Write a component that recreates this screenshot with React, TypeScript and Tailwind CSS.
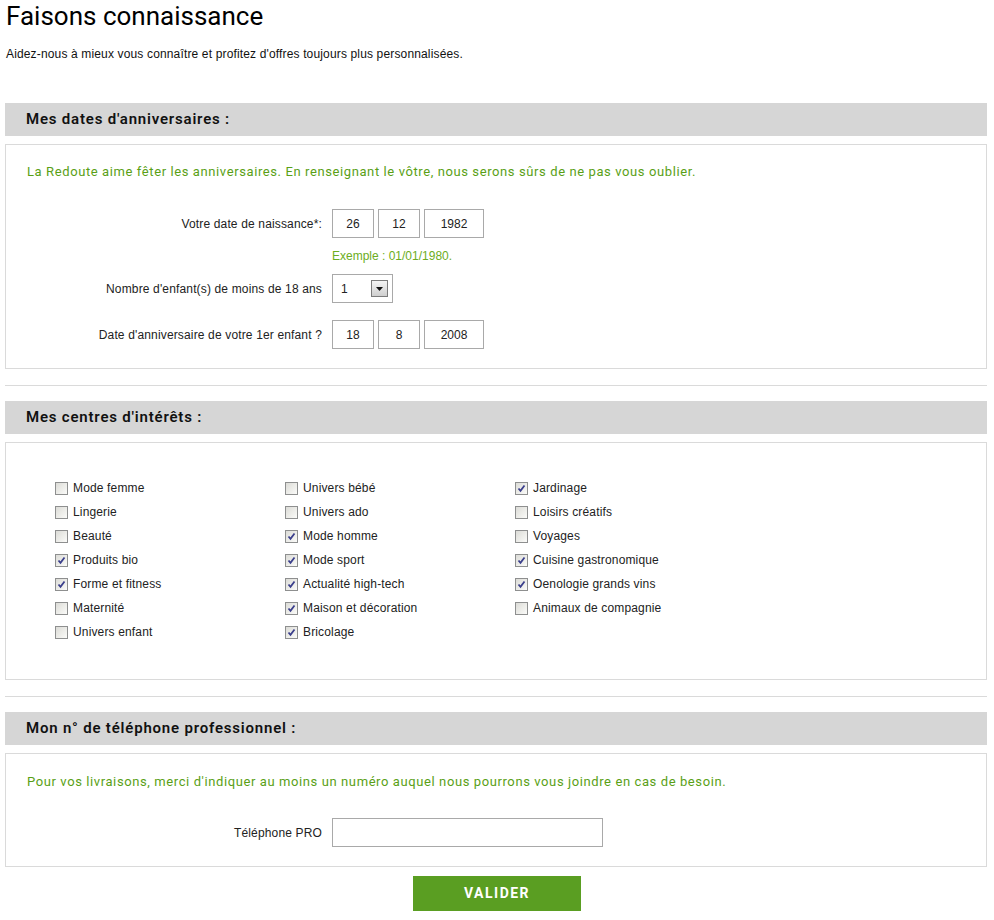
import React from 'react';

const din = { fontFamily: 'Roboto, "Open Sans", sans-serif' };
const arial = { fontFamily: '"Liberation Sans", Arial, sans-serif' };

function Checkbox({ checked }: { checked: boolean }) {
  return (
    <span className="inline-flex h-[13px] w-[13px] shrink-0 items-center justify-center border border-[#8e8f8f] bg-gradient-to-br from-[#dcdcd7] to-[#fbfbf9]">
      {checked && (
        <svg width="9" height="9" viewBox="0 0 9 9">
          <path d="M1.5 4.5 L3.5 6.8 L7.5 1.5" fill="none" stroke="#3b3f8c" strokeWidth="1.8" />
        </svg>
      )}
    </span>
  );
}

function SectionHeader({ title }: { title: string }) {
  return (
    <div className="flex h-[33px] items-center bg-[#d6d6d6] pl-[21px] text-[15px] font-semibold tracking-[0.8px] text-[#111]" style={din}>
      {title}
    </div>
  );
}

function Field({ value, w }: { value: string; w: string }) {
  return (
    <div className={`flex h-[29px] items-center justify-center border border-[#a9a9a9] bg-white text-[12px] text-[#222] ${w}`}>
      {value}
    </div>
  );
}

function Row({ label, children }: { label: string; children: React.ReactNode }) {
  return (
    <div className="flex items-center">
      <div className="w-[316px] text-right text-[12px] tracking-[0.15px] text-[#222]">{label}</div>
      <div className="ml-[10px] flex gap-[4px]">{children}</div>
    </div>
  );
}

const interests: [string, boolean][][] = [
  [
    ['Mode femme', false],
    ['Lingerie', false],
    ['Beauté', false],
    ['Produits bio', true],
    ['Forme et fitness', true],
    ['Maternité', false],
    ['Univers enfant', false],
  ],
  [
    ['Univers bébé', false],
    ['Univers ado', false],
    ['Mode homme', true],
    ['Mode sport', true],
    ['Actualité high-tech', true],
    ['Maison et décoration', true],
    ['Bricolage', true],
  ],
  [
    ['Jardinage', true],
    ['Loisirs créatifs', false],
    ['Voyages', false],
    ['Cuisine gastronomique', true],
    ['Oenologie grands vins', true],
    ['Animaux de compagnie', false],
  ],
];

export default function App() {
  return (
    <div className="w-[994px] bg-white pb-[9px]" style={arial}>
      <h1 className="pl-[6px] pt-[1px] text-[26px] leading-[30px] text-black" style={din}>
        Faisons connaissance
      </h1>
      <p className="mt-[16px] pl-[6px] text-[12px] leading-[14px] tracking-[0.15px] text-[#111]">
        Aidez-nous à mieux vous connaître et profitez d'offres toujours plus personnalisées.
      </p>

      <div className="ml-[5px] mt-[42px] w-[982px]">
        {/* Dates */}
        <SectionHeader title="Mes dates d'anniversaires :" />
        <div className="mt-[8px] border border-[#dadada] pb-[19px] pt-[19px]">
          <p className="pl-[21px] text-[13px] leading-[16px] tracking-[0.6px] text-[#5a9f16]" style={din}>
            La Redoute aime fêter les anniversaires. En renseignant le vôtre, nous serons sûrs de ne pas vous oublier.
          </p>
          <div className="mt-[29px]">
            <Row label="Votre date de naissance*:">
              <Field value="26" w="w-[42px]" />
              <Field value="12" w="w-[42px]" />
              <Field value="1982" w="w-[60px]" />
            </Row>
          </div>
          <p className="ml-[326px] mt-[11px] text-[12px] leading-[14px] text-[#6cad22]">Exemple : 01/01/1980.</p>
          <div className="mt-[11px]">
            <Row label="Nombre d'enfant(s) de moins de 18 ans">
              <div className="flex h-[29px] w-[61px] items-center justify-between border border-[#a9a9a9] bg-white pl-[8px] pr-[4px] text-[12px] text-[#222]">
                <span>1</span>
                <span className="flex h-[17px] w-[17px] items-center justify-center border border-[#7b7b7b] bg-gradient-to-b from-[#f4f4f4] to-[#cfcfcf]">
                  <svg width="7" height="4" viewBox="0 0 7 4">
                    <path d="M0 0 H7 L3.5 4 Z" fill="#111" />
                  </svg>
                </span>
              </div>
            </Row>
          </div>
          <div className="mt-[17px]">
            <Row label="Date d'anniversaire de votre 1er enfant ?">
              <Field value="18" w="w-[42px]" />
              <Field value="8" w="w-[42px]" />
              <Field value="2008" w="w-[60px]" />
            </Row>
          </div>
        </div>

        <div className="mt-[16px] h-px bg-[#dadada]" />

        {/* Interests */}
        <div className="mt-[15px]">
          <SectionHeader title="Mes centres d'intérêts :" />
        </div>
        <div className="mt-[8px] flex border border-[#dadada] pb-[35px] pl-[49px] pt-[33px]">
          {interests.map((col, ci) => (
            <div key={ci} className="flex w-[230px] flex-col">
              {col.map(([label, checked]) => (
                <div key={label} className="flex h-[24px] items-center gap-[5px] text-[12px] tracking-[0.15px] text-[#222]">
                  <Checkbox checked={checked} />
                  <span>{label}</span>
                </div>
              ))}
            </div>
          ))}
        </div>

        <div className="mt-[16px] h-px bg-[#dadada]" />

        {/* Phone */}
        <div className="mt-[15px]">
          <SectionHeader title="Mon n° de téléphone professionnel :" />
        </div>
        <div className="mt-[8px] border border-[#dadada] pb-[19px] pt-[20px]">
          <p className="pl-[21px] text-[13px] leading-[16px] tracking-[0.6px] text-[#5a9f16]" style={din}>
            Pour vos livraisons, merci d'indiquer au moins un numéro auquel nous pourrons vous joindre en cas de besoin.
          </p>
          <div className="mt-[28px]">
            <Row label="Téléphone PRO">
              <div className="h-[29px] w-[271px] border border-[#a9a9a9] bg-white" />
            </Row>
          </div>
        </div>
      </div>

      <div className="mt-[9px] flex justify-center">
        <button
          className="flex h-[35px] w-[168px] items-center justify-center bg-[#5a9e22] text-[14px] font-bold tracking-[1.5px] text-white"
          style={din}
        >
          VALIDER
        </button>
      </div>
    </div>
  );
}
